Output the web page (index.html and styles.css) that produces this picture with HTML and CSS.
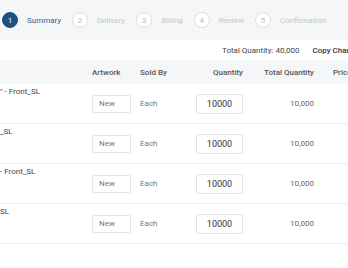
FILE: index.html
```html
<!DOCTYPE html>
<html lang="en">
<head>
  <meta charset="UTF-8">
  <title>Order - Summary</title>
  <meta name="viewport" content="width=device-width, initial-scale=1.0">
  <link rel="stylesheet" href="styles.css">
</head>
<body>

<div class="page">
  <div class="steps">
    <div class="step active"><span class="num">1</span><span class="label">Summary</span></div>
    <div class="step"><span class="num">2</span><span class="label">Delivery</span></div>
    <div class="step"><span class="num">3</span><span class="label">Billing</span></div>
    <div class="step"><span class="num">4</span><span class="label">Review</span></div>
    <div class="step"><span class="num">5</span><span class="label">Confirmation</span></div>
  </div>

  <div class="totals">
    <span class="total">Total Quantity: 40,000</span>
    <span class="copy">Copy Charges</span>
  </div>

  <div class="row head">
    <div class="cell name"></div>
    <div class="cell">Artwork</div>
    <div class="cell">Sold By</div>
    <div class="cell right">Quantity</div>
    <div class="cell right">Total Quantity</div>
    <div class="cell price">Price</div>
  </div>

  <div id="items"></div>
</div>

<script>
const items = [
  { name: "\u2033 - Front_SL", qty: 10000 },
  { name: "_SL", qty: 10000 },
  { name: "- Front_SL", qty: 10000 },
  { name: "SL", qty: 10000 }
];

const list = document.getElementById("items");
items.forEach(it => {
  list.innerHTML += `
    <div class="row item">
      <div class="cell name">${it.name}</div>
      <div class="cell"><input class="art" type="text" value="New"></div>
      <div class="cell sold">Each</div>
      <div class="cell right"><input class="qty" type="text" value="${it.qty}"></div>
      <div class="cell right">${it.qty.toLocaleString("en-US")}</div>
      <div class="cell price"></div>
    </div>
  `;
});
</script>

</body>
</html>
```

FILE: styles.css
```css
body { margin: 0; font-family: Roboto, "Liberation Sans", sans-serif; font-size: 8px; color: #444; background: white; overflow: hidden; }
.page { width: 400px; }

.steps { display: flex; align-items: center; height: 40px; padding-left: 2px; background: #f5f6f6; }
.step { display: flex; align-items: center; gap: 9px; margin-right: 11px; }
.step .num { width: 14px; height: 14px; border: 1px solid #dcdfe2; border-radius: 50%; background: white; color: #b8bcc0; display: flex; align-items: center; justify-content: center; }
.step .label { color: #c3c7cb; }
.step.active .num { background: #1c4f87; border-color: #1c4f87; color: white; }
.step.active .label { color: #2f6094; }

.totals { display: flex; align-items: center; height: 20px; padding-left: 222px; gap: 13px; }
.totals .total { color: #444; }
.totals .copy { color: #333; font-weight: 500; }

.row { display: grid; grid-template-columns: 87px 48px 50px 63px 71px 80px; }
.cell { padding: 0 5px; display: flex; align-items: center; white-space: nowrap; }
.cell.right { justify-content: flex-end; }
.cell.price { padding-left: 14px; }
.head { height: 24px; background: #f5f6f7; color: #555; font-weight: 500; }
.head .cell.name { padding: 0; }

.item { height: 39px; border-bottom: 1px solid #f0f1f1; color: #666; }
.item .cell.name { padding: 3px 0 0; align-items: flex-start; color: #444; }
.item .sold { color: #777; }

input { font-family: inherit; border: 1px solid #e2e5e7; border-radius: 2px; background: white; box-sizing: border-box; outline: none; margin: 0; }
.art { width: 39px; height: 18px; padding: 0 6px; font-size: 8px; color: #777; }
.qty { width: 47px; height: 20px; padding: 0; font-size: 9px; color: #333; text-align: center; }
```
